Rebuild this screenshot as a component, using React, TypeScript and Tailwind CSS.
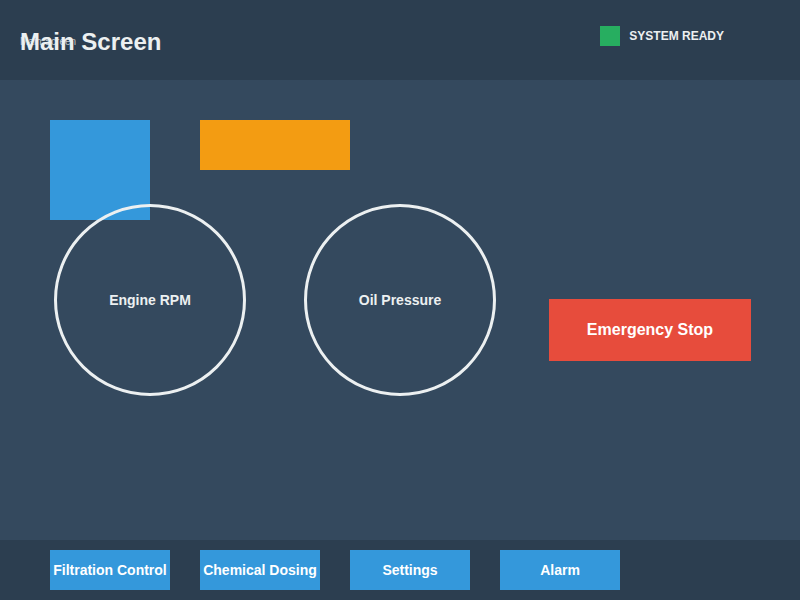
import React from 'react';

const gauges = [
  { label: 'Engine RPM', left: 'left-[54px]' },
  { label: 'Oil Pressure', left: 'left-[304px]' },
];

const navButtons = ['Filtration Control', 'Chemical Dosing', 'Settings', 'Alarm'];

export default function App() {
  return (
    <div className="w-[800px] h-[600px] flex flex-col bg-[#34495e] font-['Liberation_Sans',Arial,sans-serif] text-[#ecf0f1] overflow-hidden">
      {/* Header */}
      <div className="h-[80px] bg-[#2c3e50] flex items-center justify-between pl-5 pr-[76px] shrink-0">
        <div className="relative">
          <span className="absolute left-0 top-[7px] text-[10px] text-[#bdc3c7] whitespace-nowrap">Main Screen</span>
          <h1 className="relative text-[24px] font-bold leading-none mt-[3px]">Main Screen</h1>
        </div>
        <div className="flex items-center gap-[9px] mb-[9px]">
          <div className="w-5 h-5 bg-[#27ae60]" />
          <span className="text-[12px] font-bold mt-px">SYSTEM READY</span>
        </div>
      </div>

      {/* Canvas */}
      <div className="relative flex-1">
        <div className="absolute left-[50px] top-[40px] w-[100px] h-[100px] bg-[#3498db]" />
        <div className="absolute left-[200px] top-[40px] w-[150px] h-[50px] bg-[#f39c12]" />

        {gauges.map((g) => (
          <div
            key={g.label}
            className={`absolute ${g.left} top-[124px] w-[192px] h-[192px] rounded-full border-[3px] border-[#ecf0f1] flex items-center justify-center`}
          >
            <span className="text-[14px] font-bold">{g.label}</span>
          </div>
        ))}

        <button className="absolute left-[549px] top-[219px] w-[202px] h-[62px] bg-[#e74c3c] text-white text-[16px] font-bold">
          Emergency Stop
        </button>
      </div>

      {/* Footer nav */}
      <div className="h-[60px] bg-[#2c3e50] flex items-center gap-[30px] px-[50px] shrink-0">
        {navButtons.map((b) => (
          <button key={b} className="w-[120px] h-[40px] bg-[#3498db] text-white text-[14px] font-bold whitespace-nowrap">
            {b}
          </button>
        ))}
      </div>
    </div>
  );
}
